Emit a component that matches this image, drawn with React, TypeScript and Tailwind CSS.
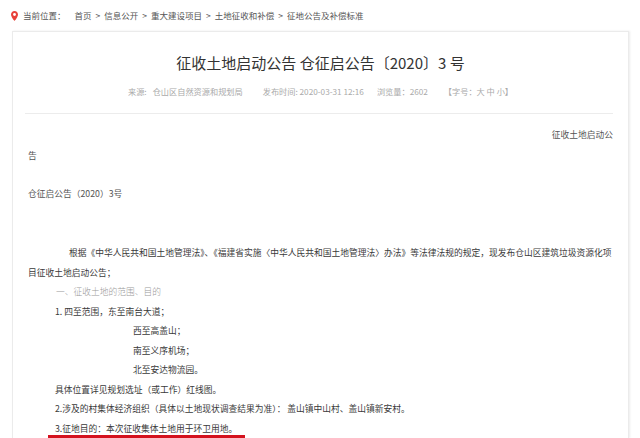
const sans = "font-['Noto_Sans_CJK_SC','Noto_Sans',sans-serif]";

const crumbs = ["首页", "信息公开", "重大建设项目", "土地征收和补偿", "征地公告及补偿标准"];

const PinIcon = () => (
  <svg width="7" height="10" viewBox="0 0 14 20" className="shrink-0">
    <path d="M7 0C3.1 0 0 3.1 0 7c0 5.2 7 13 7 13s7-7.8 7-13C14 3.1 10.9 0 7 0z" fill="#e8413a" />
    <circle cx="7" cy="7" r="2.8" fill="#fff" />
  </svg>
);

const Breadcrumb = () => (
  <div className={`${sans} flex items-center h-[31px] pl-[11px] text-[8.5px] text-[#555] whitespace-nowrap`}>
    <PinIcon />
    <span className="ml-[5px] mr-[9px]">当前位置：</span>
    {crumbs.map((c, i) => (
      <span key={i}>
        {i > 0 && <span className="mx-[4px]">&gt;</span>}
        {c}
      </span>
    ))}
  </div>
);

const MetaLine = () => (
  <div className={`${sans} flex justify-center mt-[12px] h-[12px] leading-[12px] text-[8.2px] text-[#aaa] whitespace-nowrap`}>
    <span className="mr-[6px]">来源:</span>
    <span className="mr-[20px]">仓山区自然资源和规划局</span>
    <span className="mr-[13px]">发布时间: 2020-03-31 12:16</span>
    <span className="mr-[16px]">浏览量：2602</span>
    <span>【字号：大 中 小】</span>
  </div>
);

export default function App() {
  return (
    <div className="w-[640px] h-[438px] overflow-hidden bg-white">
      <Breadcrumb />
      <div className="ml-[12px] w-[617px] h-[407px] border border-b-0 border-[#ebebeb] shadow-[1px_0_2px_#ececec]">
        <h1 className={`${sans} text-center pt-[21px] text-[15px] leading-[20px] font-normal text-[#333] whitespace-nowrap`}>
          征收土地启动公告 仓征启公告〔2020〕3 号
        </h1>
        <MetaLine />
        <div className="ml-[12px] mr-[15px] mt-[16px] h-px bg-[#ececec]" />

        <div className={`${sans} px-[15px] text-[8.75px] text-[#555]`}>
          <p className="mt-[11px] leading-[20px] text-right">征收土地启动公</p>
          <p className="mt-[1px] leading-[20px]">告</p>
          <p className="mt-[18px] leading-[20px]">仓征启公告（2020）3号</p>

          <div className="mt-[39px] leading-[19.5px] text-[#3a3a3a] whitespace-nowrap">
            <p className="pl-[41px]">
              根据《中华人民共和国土地管理法》、《福建省实施〈中华人民共和国土地管理法〉办法》等法律法规的规定，现发布仓山区建筑垃圾资源化项
            </p>
            <p>目征收土地启动公告；</p>
            <p className="pl-[28px] text-[#999] font-light">一、征收土地的范围、目的</p>
            <p className="pl-[27px]">1. 四至范围，东至南台大道；</p>
            <p className="pl-[105px]">西至高盖山；</p>
            <p className="pl-[105px]">南至义序机场；</p>
            <p className="pl-[105px]">北至安达物流园。</p>
            <p className="pl-[27px]">具体位置详见规划选址（或工作）红线图。</p>
            <p className="pl-[27px]">2.涉及的村集体经济组织（具体以土地现状调查结果为准）： 盖山镇中山村、盖山镇新安村。</p>
            <p className="pl-[20px]">
              <span className="pl-[7px] pr-[8px] border-b-[3px] border-[#d4121e]">
                3.征地目的：本次征收集体土地用于环卫用地。
              </span>
            </p>
          </div>
        </div>
      </div>
    </div>
  );
}
